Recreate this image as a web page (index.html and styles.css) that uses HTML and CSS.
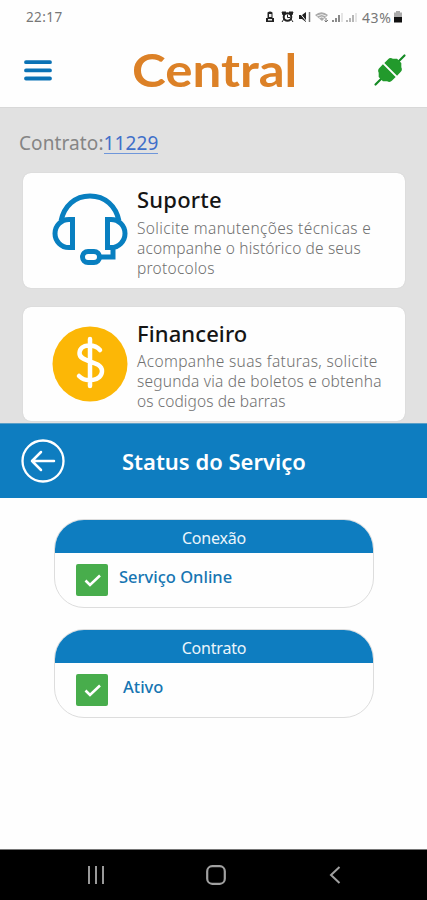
FILE: index.html
```html
<!DOCTYPE html>
<html lang="pt-BR">
<head>
<meta charset="utf-8">
<meta name="viewport" content="width=device-width, initial-scale=1">
<title>Central</title>
<link rel="stylesheet" href="styles.css">
</head>
<body>
<div class="phone">
  <div class="statusbar">
    <span class="clock">22:17</span>
    <svg class="status-icons" width="94" height="14" viewBox="0 0 92 14">
      <path d="M2.5 2.5Q5 .5 7.500 2.500V8H9V12H1V8H2.500Z" fill="#222"/><path d="M4 4H6.500V7H4ZM3 9H7V10.500H3Z" fill="#eee"/>
      <path d="M17 2H21L18 5ZM28 2H24L27 5ZM17 12L19 9M28 12L26 9" fill="#222" stroke="#222"/><circle cx="22.500" cy="7" r="3.800" fill="#fff" stroke="#222" stroke-width="2"/><path d="M22.500 4.500V7.500H25" fill="none" stroke="#222"/>
      <path d="M34 5H37L41 2V12L37 9H34Z" fill="#222"/><path d="M34 2L42 12" stroke="#fff"/><path d="M44.500 2V12" stroke="#777" stroke-width="1.500"/>
      <path d="M50 5Q56.500-.5 63 5L57 11Z" fill="#aaa"/><path d="M52 6Q57 3 61 6M54 8Q57 6 59 8" fill="none" stroke="#eee"/><path d="M61 8V12M59.500 10.500L61 12L63 10" fill="none" stroke="#777"/>
      <path d="M68 12V10M71 12V8M74 12V5" stroke="#777" stroke-width="1.700"/><path d="M77 12V3" stroke="#ccc" stroke-width="1"/>
      <path d="M82 12V10M85 12V8M88 12V5" stroke="#aaa" stroke-width="1.700"/><path d="M91 12V3" stroke="#ccc" stroke-width="1"/>
    </svg>
    <span class="percent">43%</span>
    <svg class="battery" width="8" height="12" viewBox="0 0 8 12"><path d="M2 0H6V1.500H8V7H0V1.500H2Z" fill="#aaa"/><path d="M0 6H8V11.500H0Z" fill="#111"/></svg>
  </div>
  <header class="header">
    <svg class="menu" width="30" height="24" viewBox="0 0 30 24"><path d="M3 3.200H27M3 11.400H27M3 19.500H27" stroke="#0b72b5" stroke-width="3.800" stroke-linecap="round"/></svg>
    <h1 class="brand">Central</h1>
    <svg class="plug" width="34" height="34" viewBox="0 0 34 34">
      <path d="M2.500 31.500L9 25M25 9L31.500 2.500" stroke="#158a25" stroke-width="2.200" stroke-linecap="round"/>
      <g transform="rotate(45 17 17)" fill="#229a2c"><path d="M8 16V11Q8 8 11 7L14 4H20L23 7Q26 8 26 11V16Z"/><path d="M8 18V23Q8 26 11 27L14 30H20L23 27Q26 26 26 23V18Z"/></g>
    </svg>
  </header>
  <main class="home">
    <p class="contract">Contrato:<a class="number">11229</a></p>
    <section class="card">
      <svg class="card-icon" width="76" height="76" viewBox="0 0 76 76" fill="none" stroke="#087fc0" stroke-width="5">
        <path d="M9 29C12 14 23 4 38 4S64 14 67 29M20.500 27.500V55.500H17A14 14 0 0 1 17 27.500ZM55.500 27.500V55.500H59A14 14 0 0 0 59 27.500ZM61 56V65H47"/>
        <rect x="30.500" y="59.500" width="17" height="11" rx="5.500"/>
      </svg>
      <div class="card-copy"><h2 class="card-title support">Suporte</h2><p class="card-text"><span class="line a1">Solicite manutenções técnicas e</span><span class="line a2">acompanhe o histórico de seus</span><span class="line a3">protocolos</span></p></div>
    </section>
    <section class="card billing">
      <svg class="card-icon" width="76" height="76" viewBox="0 0 76 76">
        <circle cx="38" cy="38" r="37.500" fill="#fcb706"/>
        <path d="M38 13V60M48 24C43 18 28 17 27.500 27C27 37 50 34 50 45C50 55 34 57 27 50" fill="none" stroke="#fff" stroke-width="4.500" stroke-linecap="round"/>
      </svg>
      <div class="card-copy"><h2 class="card-title finance">Financeiro</h2><p class="card-text"><span class="line b1">Acompanhe suas faturas, solicite</span><span class="line b2">segunda via de boletos e obtenha</span><span class="line b3">os codigos de barras</span></p></div>
    </section>
  </main>
  <section class="titlebar">
    <svg class="back" width="44" height="44" viewBox="0 0 44 44" fill="none" stroke="#fff" stroke-linecap="round" stroke-linejoin="round"><circle cx="22" cy="22" r="20.500" stroke-width="2.300"/><path d="M33 22H11M20 13L11 22L20 31" stroke-width="2.500"/></svg>
    <h2 class="page-title">Status do Serviço</h2>
  </section>
  <section class="services">
    <article class="service">
      <h3 class="service-head">Conexão</h3>
      <div class="service-body"><svg class="check" width="32" height="32" viewBox="0 0 32 32"><rect width="32" height="32" rx="2" fill="#48ad4c"/><path d="M9.500 16.500L14 21L24 11.500" fill="none" stroke="#fff" stroke-width="2.600"/></svg><span class="state online">Serviço Online</span></div>
    </article>
    <article class="service">
      <h3 class="service-head">Contrato</h3>
      <div class="service-body"><svg class="check" width="32" height="32" viewBox="0 0 32 32"><rect width="32" height="32" rx="2" fill="#48ad4c"/><path d="M9.500 16.500L14 21L24 11.500" fill="none" stroke="#fff" stroke-width="2.600"/></svg><span class="state active">Ativo</span></div>
    </article>
  </section>
  <nav class="navbar">
    <svg class="nav-icon" width="20" height="20" viewBox="0 0 20 20"><path d="M3 1V19M10 1V19M17 1V19" stroke="#999" stroke-width="2"/></svg>
    <svg class="nav-icon" width="20" height="20" viewBox="0 0 20 20"><rect x="1.200" y="1.200" width="17.600" height="17.600" rx="5" fill="none" stroke="#a0a0a0" stroke-width="2.200"/></svg>
    <svg class="nav-icon" width="20" height="20" viewBox="0 0 20 20"><path d="M14.500 2L6 10L14.500 18" fill="none" stroke="#a0a0a0" stroke-width="2"/></svg>
  </nav>
</div>
</body>
</html>
```
FILE: styles.css
```css
* { box-sizing: border-box; }
body, h1, h2, h3, p { margin: 0; }
body { background: #fff; font-family: "Noto Sans", sans-serif; }
.phone { width: 427px; height: 900px; display: flex; flex-direction: column; overflow: hidden; background: #fefefe; }
.statusbar { height: 34px; display: flex; align-items: center; padding-left: 26px; color: #777; font-size: 13.500px; }
.clock { width: 238px; letter-spacing: .4px; }
.status-icons { flex: none; }
.percent { width: 32px; margin-left: 4px; font-size: 14px; letter-spacing: .6px; }
.battery { flex: none; }
.header { height: 73px; display: flex; align-items: center; padding-left: 23px; }
.brand { width: 164px; margin-left: 79px; margin-top: -2px; color: #dc8127; font: 700 46px/60px Lato, sans-serif; transform: scaleX(1.11); transform-origin: left; white-space: nowrap; }
.plug { margin-left: 77px; margin-top: -1px; }
.home { height: 316px; padding: 21px 22px 0 23px; background: #e1e1e1; border-top: 1px solid #d8d8d8; }
.contract { height: 43.500px; margin-left: -4px; color: #858585; font-size: 19px; line-height: 28px; letter-spacing: .1px; white-space: nowrap; }
.number { color: #3f6fc9; border-bottom: 1px solid #6e96da; display: inline-block; line-height: 19px; }
.card { height: 115px; margin-bottom: 19px; padding: 13.500px 0 0 29px; display: flex; border-radius: 8px; background: #fefefe; box-shadow: 0 0 1px #bbb; }
.billing { height: 114px; padding-top: 13px; }
.card-icon { flex: none; margin-top: 6px; }
.card-copy { margin-left: 9px; white-space: nowrap; }
.card-title { color: #151515; font-size: 22px; line-height: 26px; font-weight: 500; }
.finance { letter-spacing: .1px; }
.support { letter-spacing: .2px; }
.card-text { margin-top: 6px; color: #707070; font-size: 15.500px; line-height: 20px; font-weight: 300; }
.line { display: block; }
.a1 { letter-spacing: .35px; }
.a2 { letter-spacing: .15px; }
.a3 { letter-spacing: .25px; }
.b1 { letter-spacing: .35px; }
.b2 { letter-spacing: .2px; }
.b3 { letter-spacing: .1px; }
.billing .card-text { margin-top: 5px; }
.titlebar { flex: none; height: 75px; display: flex; align-items: center; padding-left: 21px; background: #0e7dc0; border-top: 1px solid #5a9fc8; }
.page-title { margin-left: 57px; color: #fff; font-size: 22px; font-weight: 600; white-space: nowrap; }
.services { height: 351px; padding: 21px 53px 0 54px; }
.service { height: 89px; margin-bottom: 21px; border: 1px solid #ddd; border-radius: 30px; overflow: hidden; background: #fefefe; }
.service-head { height: 33px; background: #0e7dc0; color: #ebf5fb; text-align: center; font-size: 16px; line-height: 36px; font-weight: 400; letter-spacing: -.2px; }
.service-body { display: flex; align-items: flex-start; padding: 11px 0 0 21px; }
.state { margin-top: 1px; color: #1675b2; font-size: 16.500px; line-height: 24px; font-weight: 500; white-space: nowrap; }
.online { margin-left: 11px; }
.active { margin-left: 15px; }
.navbar { height: 51px; display: flex; justify-content: space-between; align-items: center; padding: 0 82px 0 86px; background: #000; border-top: 1px solid #777; }
```
